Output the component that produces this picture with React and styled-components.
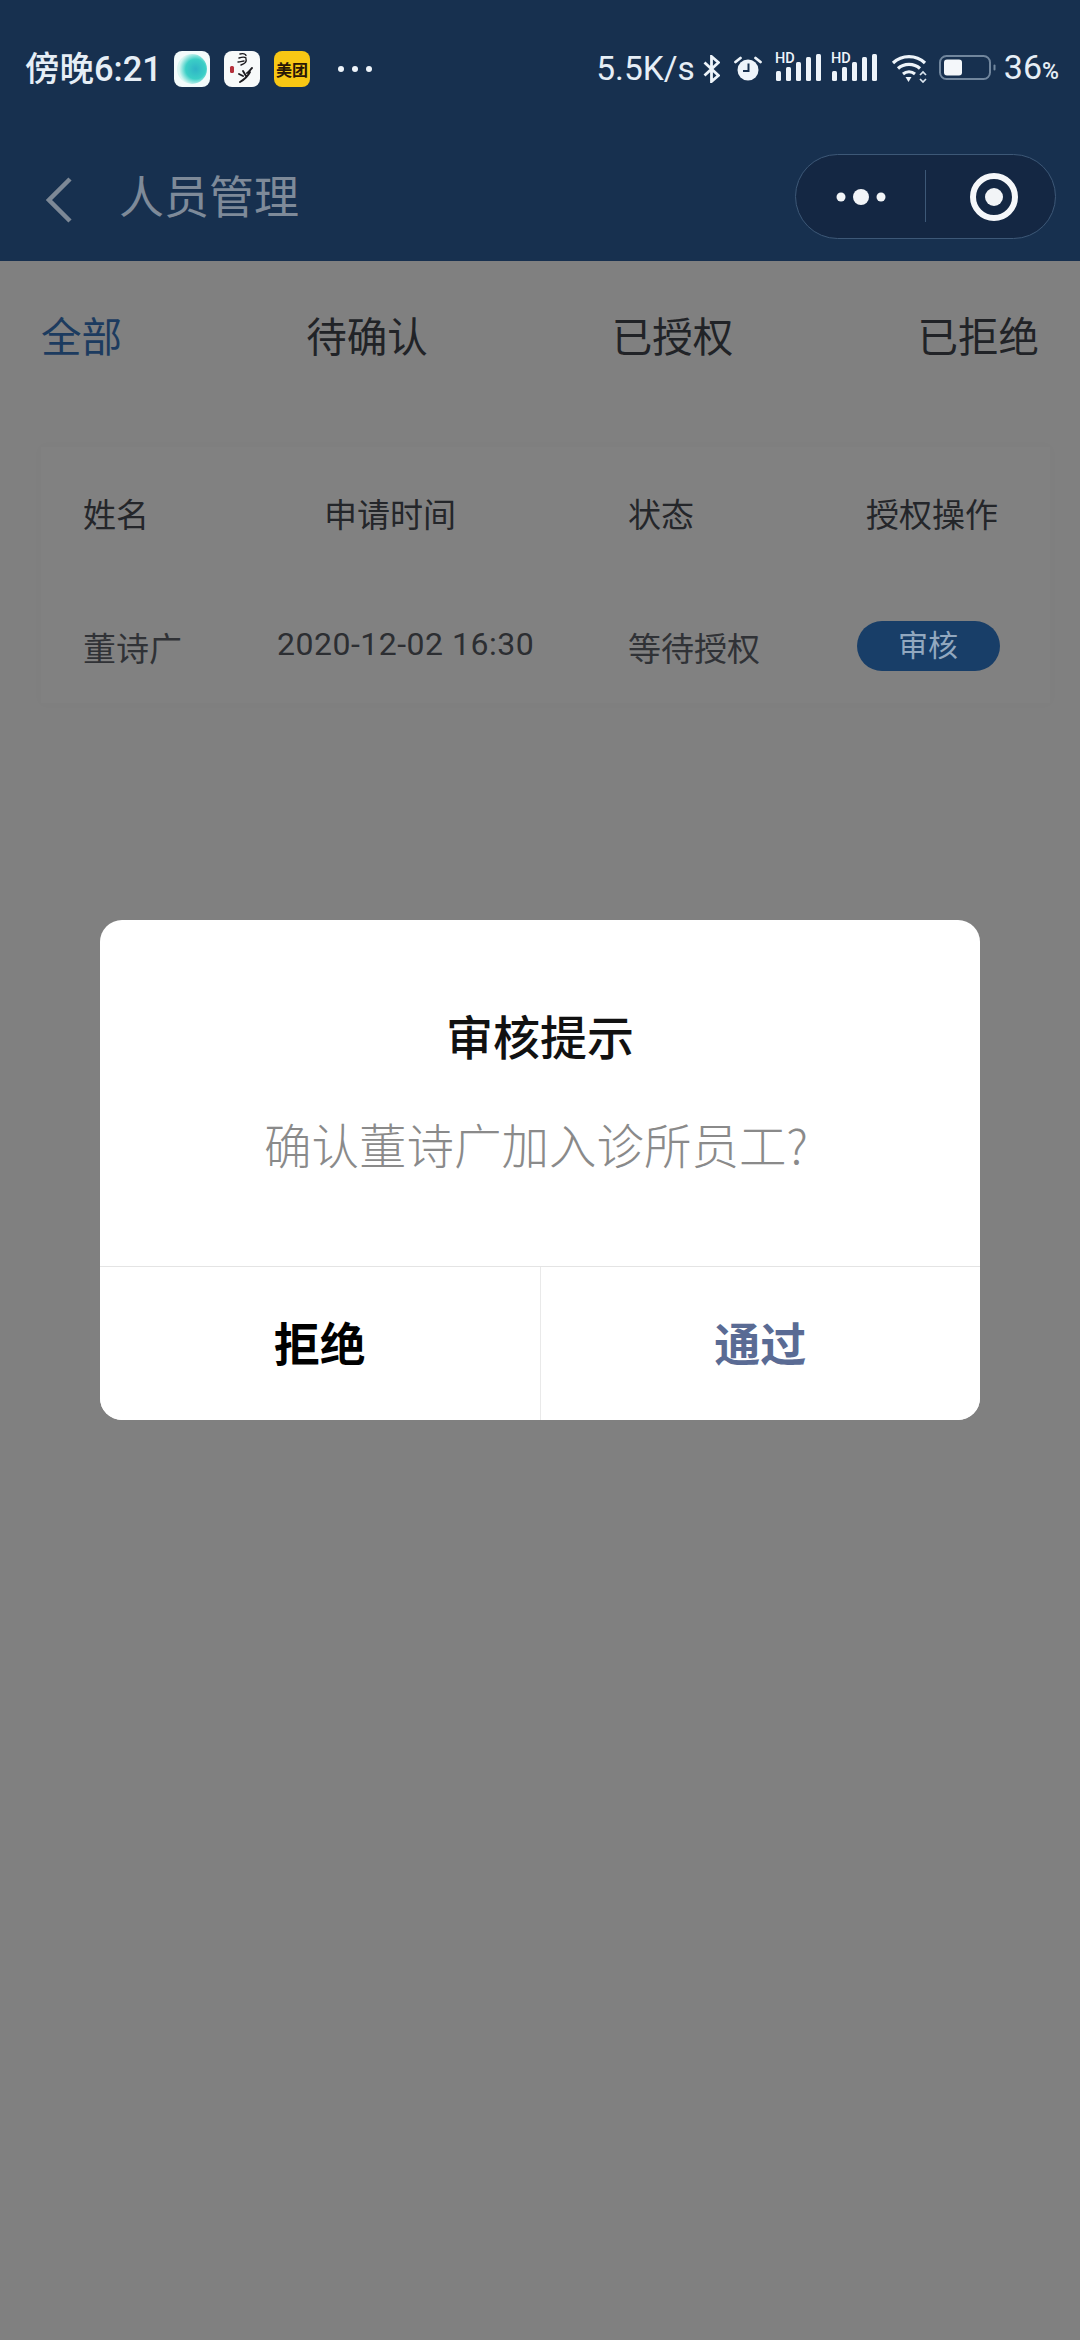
import React from "react";
import styled, { createGlobalStyle } from "styled-components";

const CJK = `"Noto Sans CJK SC", "Noto Sans", sans-serif`;
const LATIN = `Roboto, "Noto Sans CJK SC", sans-serif`;

const Global = createGlobalStyle`
  html, body { margin: 0; padding: 0; background: #808080; }
  * { box-sizing: border-box; }
  #root { font-family: ${CJK}; }
`;

const Page = styled.div`
  position: relative;
  width: 1080px;
  height: 2340px;
  background: #808080;
  overflow: hidden;
`;

const TopArea = styled.header`
  height: 261px;
  background: #17304f;
  display: flex;
  flex-direction: column;
`;

const StatusBar = styled.div`
  height: 138px;
  padding: 0 21px 0 25px;
  display: flex;
  align-items: center;
  justify-content: space-between;
  color: #e6eef6;
`;

const StatusLeft = styled.div`
  display: flex;
  align-items: center;
`;

const StatusRight = styled.div`
  display: flex;
  align-items: center;
`;

const Clock = styled.span`
  font: 500 34.5px/40px ${LATIN};
  width: 149px;
  white-space: nowrap;
`;

const AppTile = styled.span`
  width: 36px;
  height: 36px;
  margin-right: ${(p) => p.$gap || 14}px;
  border-radius: 8px;
  background: ${(p) => p.$bg};
  display: flex;
  align-items: center;
  justify-content: center;
  flex: none;
  overflow: hidden;
`;

const TileLabel = styled.span`
  font: 700 16px/18px ${CJK};
  color: #2a1606;
  white-space: nowrap;
`;

const MoreDots = styled.span`
  display: flex;
  gap: 8px;
  margin-left: 27px;
`;

const SmallDot = styled.i`
  width: 6px;
  height: 6px;
  border-radius: 50%;
  background: #eef4fa;
`;

const Speed = styled.span`
  font: 400 33.5px/40px ${LATIN};
  white-space: nowrap;
  margin-right: 8px;
`;

const Percent = styled.span`
  font: 400 34px/40px ${LATIN};
  margin-left: 8px;
  white-space: nowrap;
  display: flex;
  align-items: baseline;
`;

const PercentSign = styled.small`
  font-size: 23px;
  font-weight: 500;
`;

const StatusIcon = styled.svg`
  flex: none;
  display: block;
  margin-right: ${(p) => p.$gap || 0}px;
  margin-left: ${(p) => p.$before || 0}px;
  margin-top: ${(p) => p.$lift || 0}px;
`;

const NavBar = styled.nav`
  height: 123px;
  padding: 0 24px 0 46px;
  display: flex;
  align-items: center;
`;

const NavTitle = styled.h1`
  margin: -10px 0 0 47px;
  flex: 1;
  font: 400 45px/60px ${CJK};
  color: #7e8a99;
`;

const Capsule = styled.div`
  width: 261px;
  height: 85px;
  margin-top: -7px;
  border-radius: 43px;
  border: 1.5px solid #3d5877;
  background: #142743;
  display: flex;
  align-items: center;
`;

const CapsuleMenu = styled.div`
  width: 129px;
  height: 52px;
  padding-top: 2px;
  display: flex;
  align-items: center;
  justify-content: center;
`;

const CapsuleClose = styled.div`
  flex: 1;
  height: 52px;
  padding: 2px 0 0 7px;
  display: flex;
  align-items: center;
  justify-content: center;
  border-left: 1.5px solid #3d5877;
`;

const Tabs = styled.div`
  height: 152px;
  padding: 0 41px 4px 41px;
  display: flex;
  align-items: center;
  justify-content: space-between;
`;

const Tab = styled.span`
  font: 400 40.5px/56px ${CJK};
  color: ${(p) => (p.$active ? "#1c3b5f" : "#212327")};
`;

const Card = styled.section`
  margin: 34px 30px 0 41px;
  height: 256px;
  background: #818181;
  box-shadow: 0 0 10px rgba(0, 0, 0, 0.025);
`;

const Row = styled.div`
  display: grid;
  grid-template-columns: ${(p) => p.$columns};
  align-items: center;
  padding: ${(p) => p.$top || 0}px 0 ${(p) => p.$bottom || 0}px 42px;
  height: ${(p) => p.$height}px;
`;

const Cell = styled.span`
  font: 400 33px/44px ${CJK};
  color: ${(p) => p.$color || "#24262a"};
  white-space: nowrap;
`;

const DateCell = styled.span`
  font: 400 32px/44px ${LATIN};
  color: #2c2e32;
  white-space: nowrap;
  letter-spacing: 0.5px;
  margin-top: -6px;
`;

const AuditButton = styled.button`
  width: 143px;
  height: 50px;
  margin: -2px 0 0 1.5px;
  padding: 0 0 5px;
  border: 0;
  border-radius: 25px;
  background: #183e68;
  color: #92a8bf;
  font: 400 30px/45px ${CJK};
`;

const Scrim = styled.div`
  position: absolute;
  inset: 0;
  display: flex;
  align-items: center;
  justify-content: center;
`;

const Dialog = styled.div`
  width: 880px;
  height: 500px;
  border-radius: 22px;
  background: #fff;
  display: flex;
  flex-direction: column;
  overflow: hidden;
`;

const DialogBody = styled.div`
  height: 346px;
  padding-top: 85px;
  text-align: center;
`;

const DialogTitle = styled.h2`
  margin: 0;
  font: 500 47px/60px ${CJK};
  color: #111;
`;

const DialogText = styled.p`
  margin: 49px 8px 0 0;
  font: 300 47.5px/60px ${CJK};
  color: #8a8a8a;
`;

const DialogActions = styled.div`
  flex: 1;
  display: flex;
  border-top: 1.5px solid #e4e4e4;
`;

const ActionButton = styled.button`
  flex: 1;
  margin: 0;
  padding: 0 0 5px;
  border: 0;
  background: #fff;
  font: 700 46px/60px ${CJK};
  color: ${(p) => (p.$primary ? "#5a6b94" : "#000")};
  border-left: ${(p) => (p.$primary ? "1px solid #e9e9e9" : "none")};
`;

const Signal = () => (
  <StatusIcon width="47" height="34" viewBox="0 0 47 34" $gap={9} $lift={-6}>
    <text x="0" y="14" fontSize="14.500" fontWeight="500" fontFamily="Roboto, sans-serif" fill="#eef4fa">HD</text>
    <rect x="1" y="22" width="5" height="10" rx="1.500" fill="#eef4fa" />
    <rect x="11" y="18" width="5" height="14" rx="1.500" fill="#eef4fa" />
    <rect x="21" y="13" width="5" height="19" rx="1.500" fill="#eef4fa" />
    <rect x="31" y="8" width="5" height="24" rx="1.500" fill="#eef4fa" />
    <rect x="41" y="5" width="5" height="27" rx="1.500" fill="#eef4fa" />
  </StatusIcon>
);

export default function App() {
  return (
    <Page>
      <Global />
      <TopArea>
        <StatusBar>
          <StatusLeft>
            <Clock>傍晚6:21</Clock>
            <AppTile $bg="#f3fbfb">
              <svg width="36" height="36" viewBox="0 0 36 36">
                <defs>
                  <radialGradient id="orb" cx="0.62" cy="0.5" r="0.55">
                    <stop offset="0" stopColor="#2fb4c6" />
                    <stop offset="0.6" stopColor="#3bcfc6" />
                    <stop offset="1" stopColor="#d6f5f1" />
                  </radialGradient>
                </defs>
                <circle cx="18" cy="18" r="15" fill="url(#orb)" />
              </svg>
            </AppTile>
            <AppTile $bg="#f7fafa">
              <svg width="36" height="36" viewBox="0 0 36 36" fill="none" stroke="#1c1c20" strokeLinecap="round">
                <path d="M16 3c3-1 6 0 6 1.500M15 7c3-1 6-1 7 0M22 8c1 3-2 5-5 6M14 11c2 0 5-1 6-1" strokeWidth="1.400" />
                <path d="M28 17c-2 2-3 4-5 5M26 21c-2 4-5 7-10 10M19 20l3 5M15 23l4 2" strokeWidth="1.900" />
                <rect x="6" y="15" width="4" height="7" rx="1.500" fill="#b5303c" stroke="none" />
              </svg>
            </AppTile>
            <AppTile $bg="#f8c714" $gap={1}>
              <TileLabel>美团</TileLabel>
            </AppTile>
            <MoreDots>
              <SmallDot />
              <SmallDot />
              <SmallDot />
            </MoreDots>
          </StatusLeft>
          <StatusRight>
            <Speed>5.5K/s</Speed>
            <StatusIcon width="17" height="28" viewBox="0 0 17 28" fill="none" stroke="#eef4fa" strokeWidth="2.800" $gap={14}>
              <path d="M1.500 7.500l14 13-7 6V1.500l7 6-14 13" />
            </StatusIcon>
            <StatusIcon width="28" height="25" viewBox="0 0 28 25" $gap={13} $lift={-2}>
              <circle cx="14" cy="14" r="10.500" fill="#eef4fa" />
              <path d="M14.500 7.500V15H9" fill="none" stroke="#17304f" strokeWidth="2" />
              <path d="M1.500 6l5-4M26.500 6l-5-4" stroke="#eef4fa" strokeWidth="2.800" strokeLinecap="round" />
            </StatusIcon>
            <Signal />
            <Signal />
            <StatusIcon width="38" height="29" viewBox="0 0 38 29" fill="none" $before={4} $gap={10} $lift={-2}>
              <path d="M2 9c9-8.500 23-8.500 32 0" stroke="#eef4fa" strokeWidth="3.200" />
              <path d="M7 14.500c6-5.500 16-5.500 22 0" stroke="#eef4fa" strokeWidth="3.200" />
              <path d="M12 20c3.500-3 8.500-3 12 0" stroke="#eef4fa" strokeWidth="3" />
              <path d="M14.500 23h6l-3 5z" fill="#eef4fa" />
              <path d="M29 21l3-3 3 3M29 25l3 3 3-3" stroke="#dbe5ef" strokeWidth="1.700" />
            </StatusIcon>
            <StatusIcon width="57" height="25" viewBox="0 0 57 25" $lift={-4}>
              <rect x="1" y="1" width="50" height="23" rx="6.500" fill="none" stroke="#71869d" strokeWidth="2" />
              <rect x="5" y="4.500" width="18" height="16" rx="3" fill="#f4f7fa" />
              <rect x="54.500" y="9.500" width="2" height="6" rx="1" fill="#71869d" />
            </StatusIcon>
            <Percent>
              36<PercentSign>%</PercentSign>
            </Percent>
          </StatusRight>
        </StatusBar>
        <NavBar>
          <svg width="26" height="46" viewBox="0 0 26 46" fill="none" stroke="#7d8896" strokeWidth="4.500">
            <path d="M24 2L3 23l21 21" />
          </svg>
          <NavTitle>人员管理</NavTitle>
          <Capsule>
            <CapsuleMenu>
              <svg width="50" height="18" viewBox="0 0 50 18" fill="#f2f5f8">
                <circle cx="5" cy="9" r="4.500" />
                <circle cx="25" cy="9" r="8" />
                <circle cx="45" cy="9" r="4.500" />
              </svg>
            </CapsuleMenu>
            <CapsuleClose>
              <svg width="50" height="50" viewBox="0 0 50 50">
                <circle cx="25" cy="25" r="21" fill="none" stroke="#f5f7fa" strokeWidth="6" />
                <circle cx="25" cy="25" r="9" fill="#f2f4f7" />
              </svg>
            </CapsuleClose>
          </Capsule>
        </NavBar>
      </TopArea>

      <Tabs>
        <Tab $active>全部</Tab>
        <Tab>待确认</Tab>
        <Tab>已授权</Tab>
        <Tab>已拒绝</Tab>
      </Tabs>

      <Card>
        <Row $columns="241px 304px 238px auto" $height={136} $bottom={5}>
          <Cell>姓名</Cell>
          <Cell>申请时间</Cell>
          <Cell>状态</Cell>
          <Cell>授权操作</Cell>
        </Row>
        <Row $columns="194px 351px 227px 143px" $height={120} $top={8}>
          <Cell $color="#303236">董诗广</Cell>
          <DateCell>2020-12-02 16:30</DateCell>
          <Cell $color="#303236">等待授权</Cell>
          <AuditButton>审核</AuditButton>
        </Row>
      </Card>

      <Scrim>
        <Dialog>
          <DialogBody>
            <DialogTitle>审核提示</DialogTitle>
            <DialogText>确认董诗广加入诊所员工?</DialogText>
          </DialogBody>
          <DialogActions>
            <ActionButton>拒绝</ActionButton>
            <ActionButton $primary>通过</ActionButton>
          </DialogActions>
        </Dialog>
      </Scrim>
    </Page>
  );
}
